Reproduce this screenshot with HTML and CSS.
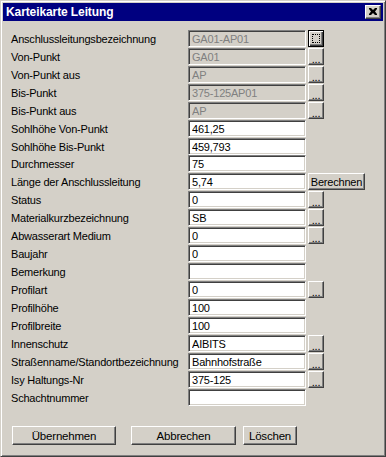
FILE: index.html
```html
<!DOCTYPE html>
<html lang="de">
<head>
    <meta charset="UTF-8">
    <title>Karteikarte Leitung</title>
    <link rel="stylesheet" href="styles.css">
</head>
<body>
    <div class="window">
        <div class="titlebar">
            <span class="title">Karteikarte Leitung</span>
            <button class="close-btn" type="button">
                <svg width="8" height="7" viewBox="0 0 8 7">
                    <path d="M0 0h2l2 2 2-2h2v1L6 3.5 8 6v1H6L4 5 2 7H0V6l2-2.5L0 1z" fill="#000"/>
                </svg>
            </button>
        </div>

        <div class="content">
            <div class="row">
                <label>Anschlussleitungsbezeichnung</label>
                <input class="field" type="text" value="GA01-AP01" disabled>
                <button class="btn dots focused" type="button"><span class="focus-ring"></span></button>
            </div>
            <div class="row">
                <label>Von-Punkt</label>
                <input class="field" type="text" value="GA01" disabled>
                <button class="btn dots" type="button">...</button>
            </div>
            <div class="row">
                <label>Von-Punkt aus</label>
                <input class="field" type="text" value="AP" disabled>
                <button class="btn dots" type="button">...</button>
            </div>
            <div class="row">
                <label>Bis-Punkt</label>
                <input class="field" type="text" value="375-125AP01" disabled>
                <button class="btn dots" type="button">...</button>
            </div>
            <div class="row">
                <label>Bis-Punkt aus</label>
                <input class="field" type="text" value="AP" disabled>
                <button class="btn dots" type="button">...</button>
            </div>
            <div class="row">
                <label>Sohlhöhe Von-Punkt</label>
                <input class="field" type="text" value="461,25">
            </div>
            <div class="row tight">
                <label>Sohlhöhe Bis-Punkt</label>
                <input class="field" type="text" value="459,793">
            </div>
            <div class="row">
                <label>Durchmesser</label>
                <input class="field" type="text" value="75">
            </div>
            <div class="row">
                <label>Länge der Anschlussleitung</label>
                <input class="field" type="text" value="5,74">
                <button class="btn calc" type="button">Berechnen</button>
            </div>
            <div class="row">
                <label>Status</label>
                <input class="field" type="text" value="0">
                <button class="btn dots" type="button">...</button>
            </div>
            <div class="row">
                <label>Materialkurzbezeichnung</label>
                <input class="field" type="text" value="SB">
                <button class="btn dots" type="button">...</button>
            </div>
            <div class="row">
                <label>Abwasserart Medium</label>
                <input class="field" type="text" value="0">
                <button class="btn dots" type="button">...</button>
            </div>
            <div class="row">
                <label>Baujahr</label>
                <input class="field" type="text" value="0">
            </div>
            <div class="row">
                <label>Bemerkung</label>
                <input class="field" type="text" value="">
            </div>
            <div class="row">
                <label>Profilart</label>
                <input class="field" type="text" value="0">
                <button class="btn dots" type="button">...</button>
            </div>
            <div class="row">
                <label>Profilhöhe</label>
                <input class="field" type="text" value="100">
            </div>
            <div class="row">
                <label>Profilbreite</label>
                <input class="field" type="text" value="100">
            </div>
            <div class="row">
                <label>Innenschutz</label>
                <input class="field" type="text" value="AIBITS">
                <button class="btn dots" type="button">...</button>
            </div>
            <div class="row">
                <label>Straßenname/Standortbezeichnung</label>
                <input class="field" type="text" value="Bahnhofstraße">
                <button class="btn dots" type="button">...</button>
            </div>
            <div class="row">
                <label>Isy Haltungs-Nr</label>
                <input class="field" type="text" value="375-125">
                <button class="btn dots" type="button">...</button>
            </div>
            <div class="row">
                <label>Schachtnummer</label>
                <input class="field" type="text" value="">
            </div>

            <div class="actions">
                <button class="btn action ok" type="button">Übernehmen</button>
                <button class="btn action cancel" type="button">Abbrechen</button>
                <button class="btn action delete" type="button">Löschen</button>
            </div>
        </div>
    </div>
</body>
</html>
```

FILE: styles.css
```css
* {
    margin: 0;
    padding: 0;
    box-sizing: border-box;
}

body {
    font-family: 'Liberation Sans', Arial, sans-serif;
    font-size: 11px;
    letter-spacing: -0.2px;
    color: #000;
    background: #d4d0c8;
}

.window {
    width: 386px;
    height: 457px;
    background: #d4d0c8;
    border: 1px solid;
    border-color: #d4d0c8 #404040 #404040 #d4d0c8;
    box-shadow: inset 1px 1px #fff, inset -1px -1px #808080;
    padding: 2px;
}

.titlebar {
    height: 18px;
    background: #000080;
    display: flex;
    align-items: center;
    justify-content: space-between;
    padding: 0 2px 0 2px;
}

.title {
    color: #fff;
    font-weight: bold;
    font-size: 12px;
    letter-spacing: -0.1px;
    padding-left: 1px;
}

.close-btn {
    width: 16px;
    height: 14px;
    background: #d4d0c8;
    border: 1px solid;
    border-color: #fff #404040 #404040 #fff;
    box-shadow: inset -1px -1px #808080;
    display: flex;
    align-items: center;
    justify-content: center;
    padding-bottom: 1px;
}

.content {
    padding: 9px 0 0 8px;
}

.row {
    display: flex;
    align-items: center;
    height: 17px;
    margin-bottom: 1px;
}

.row.tight {
    margin-bottom: 0;
}

.row label {
    width: 177px;
    white-space: nowrap;
    padding-top: 1px;
}

.field {
    width: 118px;
    height: 17px;
    font-family: 'Liberation Sans', Arial, sans-serif;
    font-size: 11px;
    letter-spacing: -0.2px;
    color: #000;
    background: #fff;
    border: 1px solid;
    border-color: #808080 #fff #fff #808080;
    box-shadow: inset 1px 1px #404040, inset -1px -1px #d4d0c8;
    padding: 1px 0 0 3px;
    outline: none;
}

.field:disabled {
    background: #d4d0c8;
    color: #808080;
}

.btn {
    font-family: 'Liberation Sans', Arial, sans-serif;
    font-size: 11px;
    letter-spacing: -0.2px;
    color: #000;
    background: #d4d0c8;
    border: 1px solid;
    border-color: #fff #404040 #404040 #fff;
    box-shadow: inset -1px -1px #808080;
    height: 17px;
    margin-left: 2px;
    display: flex;
    align-items: center;
    justify-content: center;
}

.btn.dots {
    width: 16px;
    line-height: 1;
    padding-top: 5px;
}

.btn.focused {
    border: 1px solid #000;
    box-shadow: inset 1px 1px #fff, inset -1px -1px #404040, inset -2px -2px #808080;
    padding: 0;
}

.focus-ring {
    width: 8px;
    height: 9px;
    border: 1px dotted #000;
}

.btn.calc {
    width: 57px;
    padding-top: 1px;
}

.actions {
    display: flex;
    margin-top: 20px;
}

.btn.action {
    height: 19px;
    margin-left: 0;
    font-size: 11.5px;
}

.ok {
    width: 104px;
    margin-left: 1px !important;
}

.cancel {
    width: 105px;
    margin-left: 15px !important;
}

.delete {
    width: 54px;
    margin-left: 7px !important;
}
```
